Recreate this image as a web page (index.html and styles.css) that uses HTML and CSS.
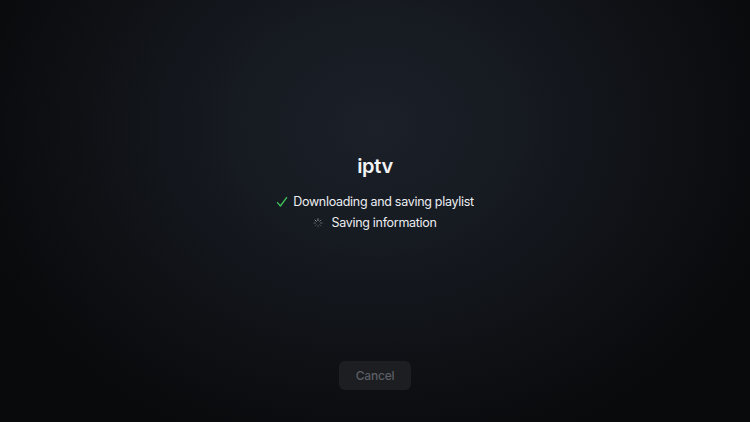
FILE: index.html
```html
<!DOCTYPE html>
<html>
<head>
<meta charset="utf-8">
<link rel="stylesheet" href="styles.css">
</head>
<body>
<div class="screen">
  <div class="content">
    <h1 class="title">iptv</h1>
    <ul class="steps">
      <li class="step">
        <svg class="check" viewBox="0 0 12 12" width="12" height="12"><path d="M1.5 6.6 L4.4 10 L10.6 1.6" fill="none" stroke="#3fbf5a" stroke-width="1.4" stroke-linecap="round" stroke-linejoin="round"/></svg>
        <span>Downloading and saving playlist</span>
      </li>
      <li class="step">
        <svg class="spinner" viewBox="0 0 12 12" width="10" height="10">
          <g stroke-width="1.2" stroke-linecap="round">
            <line x1="6" y1="1" x2="6" y2="3.2" stroke="#8a8f98"/>
            <line x1="9.5" y1="2.5" x2="8" y2="4" stroke="#6e737b"/>
            <line x1="11" y1="6" x2="8.8" y2="6" stroke="#5a5e66"/>
            <line x1="9.5" y1="9.5" x2="8" y2="8" stroke="#4a4e55"/>
            <line x1="6" y1="11" x2="6" y2="8.8" stroke="#444850"/>
            <line x1="2.5" y1="9.5" x2="4" y2="8" stroke="#444850"/>
            <line x1="1" y1="6" x2="3.2" y2="6" stroke="#555960"/>
            <line x1="2.5" y1="2.5" x2="4" y2="4" stroke="#9aa0a8"/>
          </g>
        </svg>
        <span>Saving information</span>
      </li>
    </ul>
  </div>
  <button class="cancel">Cancel</button>
</div>
</body>
</html>
```
FILE: styles.css
```css
html, body {
  margin: 0;
  padding: 0;
  height: 100%;
}
body {
  background: #0a0b0d;
  font-family: Inter, "Liberation Sans", sans-serif;
  color: #f2f3f5;
}
.screen {
  width: 750px;
  height: 422px;
  display: flex;
  flex-direction: column;
  align-items: center;
  background: radial-gradient(ellipse 55% 80% at 50% 30%, #1b2029 0%, #161a21 35%, #0f1115 70%, #090a0c 100%);
  overflow: hidden;
}
.content {
  margin-top: 152px;
  display: flex;
  flex-direction: column;
  align-items: center;
}
.title {
  margin: 0;
  font-size: 20px;
  line-height: 28px;
  font-weight: 600;
  letter-spacing: -0.3px;
}
.steps {
  list-style: none;
  margin: 11px 0 0;
  padding: 0;
  display: flex;
  flex-direction: column;
  align-items: center;
}
.step {
  display: flex;
  align-items: center;
  gap: 5px;
  font-size: 12.5px;
  line-height: 21px;
  color: #eceef1;
  letter-spacing: -0.3px;
}
.check {
  margin-top: 1px;
}
.spinner {
  margin-right: 3px;
  margin-top: 1px;
}
.cancel {
  margin-top: auto;
  margin-bottom: 32px;
  width: 72px;
  height: 29px;
  border: none;
  border-radius: 6px;
  background: #1c1e22;
  color: #5c5f64;
  font-family: Inter, "Liberation Sans", sans-serif;
  font-size: 12px;
  font-weight: 500;
  letter-spacing: -0.2px;
}
```
